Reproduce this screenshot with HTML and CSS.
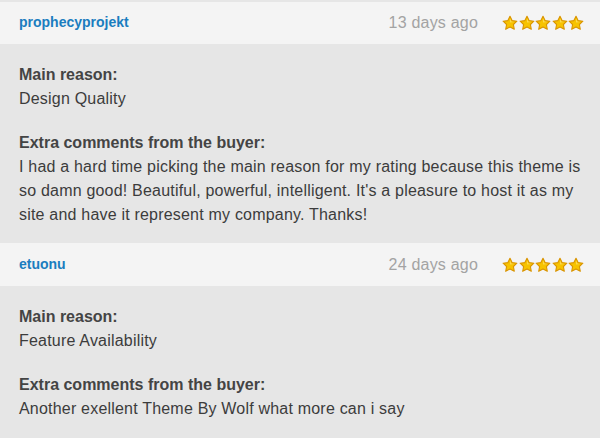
FILE: index.html
```html
<!DOCTYPE html>
<html>
<head>
<meta charset="utf-8">
<link rel="stylesheet" href="styles.css">
</head>
<body>
<svg width="0" height="0" class="defs">
  <defs>
    <symbol id="star" viewBox="0 0 16 16">
      <path d="M8 1.2 L10.1 5.6 L14.9 6.2 L11.4 9.5 L12.3 14.3 L8 12 L3.7 14.3 L4.6 9.5 L1.1 6.2 L5.9 5.6 Z" fill="#f7c300" stroke="#d99400" stroke-width="1.1" stroke-linejoin="round"/>
      <path d="M8 3.2 L9.4 6.4 L12.6 6.9 L8 7.6 Z" fill="#ffe270" opacity="0.7"/>
    </symbol>
  </defs>
</svg>
<div class="reviews">
  <div class="review">
    <div class="review-head">
      <a class="user">prophecyprojekt</a>
      <span class="date">13 days ago</span>
      <span class="stars">
        <svg class="star"><use href="#star"/></svg><svg class="star"><use href="#star"/></svg><svg class="star"><use href="#star"/></svg><svg class="star"><use href="#star"/></svg><svg class="star"><use href="#star"/></svg>
      </span>
    </div>
    <div class="review-body">
      <p class="block"><strong>Main reason:</strong><br>Design Quality</p>
      <p class="block"><strong>Extra comments from the buyer:</strong><br>I had a hard time picking the main reason for my rating because this theme is so damn good! Beautiful, powerful, intelligent. It's a pleasure to host it as my site and have it represent my company. Thanks!</p>
    </div>
  </div>
  <div class="review">
    <div class="review-head tall">
      <a class="user">etuonu</a>
      <span class="date">24 days ago</span>
      <span class="stars">
        <svg class="star"><use href="#star"/></svg><svg class="star"><use href="#star"/></svg><svg class="star"><use href="#star"/></svg><svg class="star"><use href="#star"/></svg><svg class="star"><use href="#star"/></svg>
      </span>
    </div>
    <div class="review-body">
      <p class="block"><strong>Main reason:</strong><br>Feature Availability</p>
      <p class="block"><strong>Extra comments from the buyer:</strong><br>Another exellent Theme By Wolf what more can i say</p>
    </div>
  </div>
</div>
</body>
</html>
```
FILE: styles.css
```css
html, body {
  margin: 0;
  padding: 0;
  background: #e6e6e6;
  font-family: "Liberation Sans", Arial, sans-serif;
  overflow: hidden;
}
.defs {
  position: absolute;
  width: 0;
  height: 0;
}
.reviews {
  padding-top: 2px;
}
.review-head {
  display: flex;
  align-items: center;
  height: 42px;
  padding: 0 16px 0 19px;
  background: #f4f4f4;
}
.review-head.tall {
  height: 43px;
}
.user {
  font-size: 14px;
  font-weight: bold;
  color: #1a7dbf;
  margin-bottom: 2px;
}
.date {
  margin-left: auto;
  font-size: 16px;
  letter-spacing: 0.2px;
  color: #a3a3a3;
  margin-right: 24px;
}
.stars {
  display: flex;
  gap: 0.5px;
}
.star {
  width: 16px;
  height: 16px;
  display: block;
}
.review-body {
  padding: 19px 19px 16px 19px;
  color: #3c3c3c;
  font-size: 16px;
  letter-spacing: 0.2px;
  line-height: 24px;
}
.block {
  margin: 0 0 20px;
}
.block:last-child {
  margin-bottom: 0;
}
.block strong {
  color: #444;
  letter-spacing: 0;
}
```
